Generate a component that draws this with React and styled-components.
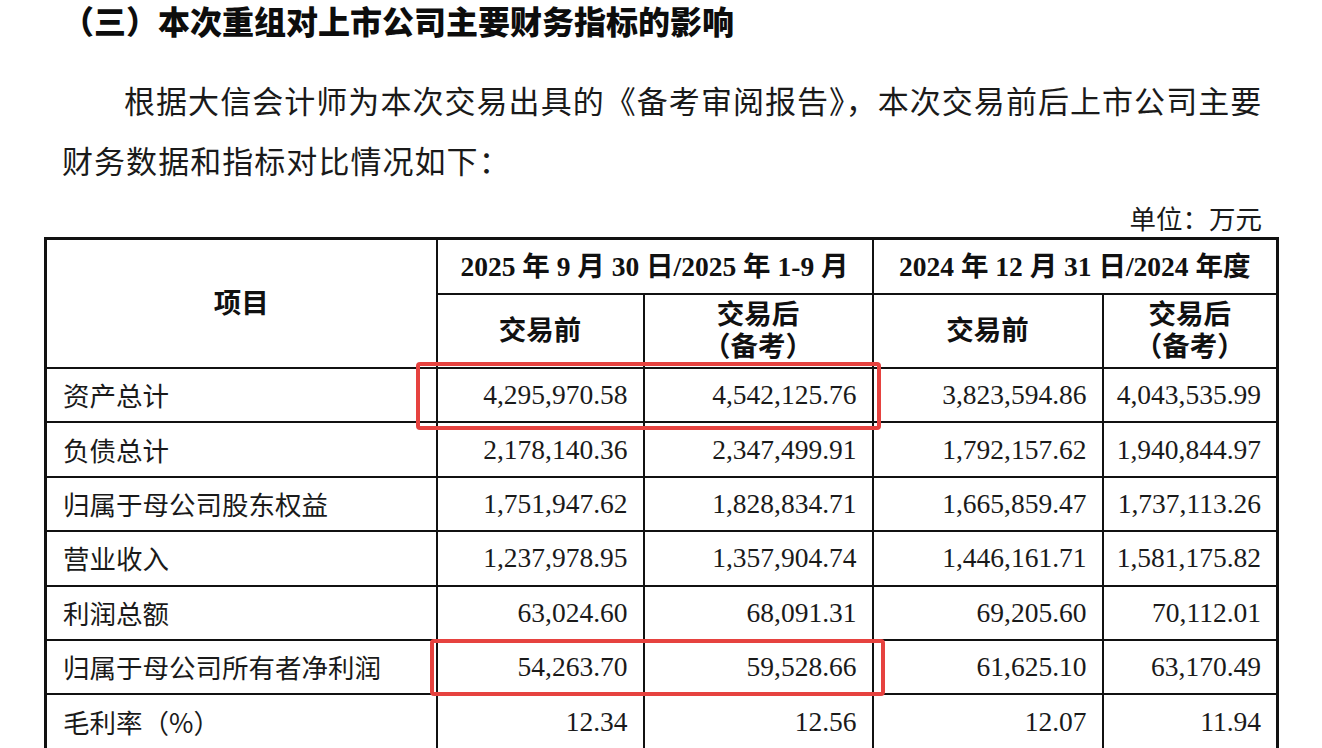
import React from "react";
import styled, { createGlobalStyle } from "styled-components";

const GlobalStyle = createGlobalStyle`
  html, body { margin: 0; padding: 0; background: #ffffff; }
  body {
    font-family: "Liberation Serif", "Noto Sans CJK SC", serif;
    color: #151515;
    overflow: hidden;
  }
`;

const Page = styled.div`
  width: 1322px;
  height: 748px;
  box-sizing: border-box;
  padding: 1px 0 0 44px;
  overflow: hidden;
`;

const Title = styled.h2`
  margin: 0;
  padding-left: 18px;
  font-family: "Noto Sans CJK SC", sans-serif;
  font-size: 32px;
  line-height: 38px;
  font-weight: 900;
  color: #0d0d0d;
`;

const Para = styled.p`
  margin: 31px 0 0;
  width: 1222px;
  padding-left: 18px;
  font-family: "Noto Sans CJK SC", sans-serif;
  font-size: 31px;
  line-height: 60px;
  font-weight: 400;
  letter-spacing: 1.05px;
  text-indent: 2em;
  color: #1a1a1a;
`;

const Unit = styled.div`
  margin-top: 9px;
  width: 1232px;
  box-sizing: border-box;
  padding-right: 14px;
  text-align: right;
  font-family: "Noto Sans CJK SC", sans-serif;
  font-size: 26.5px;
  line-height: 38px;
  color: #1a1a1a;
`;

const TableWrap = styled.div`
  position: relative;
  width: 1232px;
`;

const Table = styled.table`
  width: 1232px;
  border-collapse: collapse;
  table-layout: fixed;
  border: 3px solid #111;
`;

const HeadCell = styled.th`
  border: 2px solid #111;
  padding: 0 4px;
  height: ${(p) => p.$h}px;
  text-align: center;
  vertical-align: middle;
  font-family: "Liberation Serif", "Noto Sans CJK SC", serif;
  font-size: 27.5px;
  line-height: 32px;
  font-weight: 700;
  color: #111;
  font-feature-settings: "halt";
  white-space: nowrap;
`;

const LabelCell = styled.td`
  border: 2px solid #111;
  height: 52.4px;
  padding: 0 0 0 16px;
  font-family: "Noto Sans CJK SC", sans-serif;
  font-size: 26.5px;
  line-height: 32px;
  font-weight: 400;
  color: #1a1a1a;
  vertical-align: middle;
  white-space: nowrap;
`;

const NumCell = styled.td`
  border: 2px solid #111;
  height: 52.4px;
  padding: 0 15px 0 0;
  text-align: right;
  font-family: "Liberation Serif", serif;
  font-size: 27.5px;
  line-height: 32px;
  color: #1a1a1a;
  vertical-align: middle;
  white-space: nowrap;
`;

const Highlight = styled.div`
  position: absolute;
  left: ${(p) => p.$left}px;
  top: ${(p) => p.$top}px;
  width: ${(p) => p.$w}px;
  height: ${(p) => p.$h}px;
  box-sizing: border-box;
  border: 4px solid #e6423f;
  border-radius: 4px;
  pointer-events: none;
`;

const rows = [
  ["资产总计", "4,295,970.58", "4,542,125.76", "3,823,594.86", "4,043,535.99"],
  ["负债总计", "2,178,140.36", "2,347,499.91", "1,792,157.62", "1,940,844.97"],
  ["归属于母公司股东权益", "1,751,947.62", "1,828,834.71", "1,665,859.47", "1,737,113.26"],
  ["营业收入", "1,237,978.95", "1,357,904.74", "1,446,161.71", "1,581,175.82"],
  ["利润总额", "63,024.60", "68,091.31", "69,205.60", "70,112.01"],
  ["归属于母公司所有者净利润", "54,263.70", "59,528.66", "61,625.10", "63,170.49"],
  ["毛利率（%）", "12.34", "12.56", "12.07", "11.94"],
];

export default function App() {
  return (
    <>
      <GlobalStyle />
      <Page>
        <Title>（三）本次重组对上市公司主要财务指标的影响</Title>
        <Para>
          根据大信会计师为本次交易出具的《备考审阅报告》，本次交易前后上市公司主要财务数据和指标对比情况如下：
        </Para>
        <Unit>单位：万元</Unit>
        <TableWrap>
          <Table>
            <colgroup>
              <col style={{ width: 391 }} />
              <col style={{ width: 207 }} />
              <col style={{ width: 229 }} />
              <col style={{ width: 230 }} />
              <col style={{ width: 175 }} />
            </colgroup>
            <thead>
              <tr>
                <HeadCell rowSpan={2} $h={53}>项目</HeadCell>
                <HeadCell colSpan={2} $h={53}>2025 年 9 月 30 日/2025 年 1-9 月</HeadCell>
                <HeadCell colSpan={2} $h={53}>2024 年 12 月 31 日/2024 年度</HeadCell>
              </tr>
              <tr>
                <HeadCell $h={72}>交易前</HeadCell>
                <HeadCell $h={72}>
                  交易后
                  <br />
                  （备考）
                </HeadCell>
                <HeadCell $h={72}>交易前</HeadCell>
                <HeadCell $h={72}>
                  交易后
                  <br />
                  （备考）
                </HeadCell>
              </tr>
            </thead>
            <tbody>
              {rows.map((r) => (
                <tr key={r[0]}>
                  <LabelCell>{r[0]}</LabelCell>
                  <NumCell>{r[1]}</NumCell>
                  <NumCell>{r[2]}</NumCell>
                  <NumCell>{r[3]}</NumCell>
                  <NumCell>{r[4]}</NumCell>
                </tr>
              ))}
            </tbody>
          </Table>
          <Highlight $left={372} $top={125} $w={465} $h={68} />
          <Highlight $left={386} $top={402} $w={455} $h={57} />
        </TableWrap>
      </Page>
    </>
  );
}
